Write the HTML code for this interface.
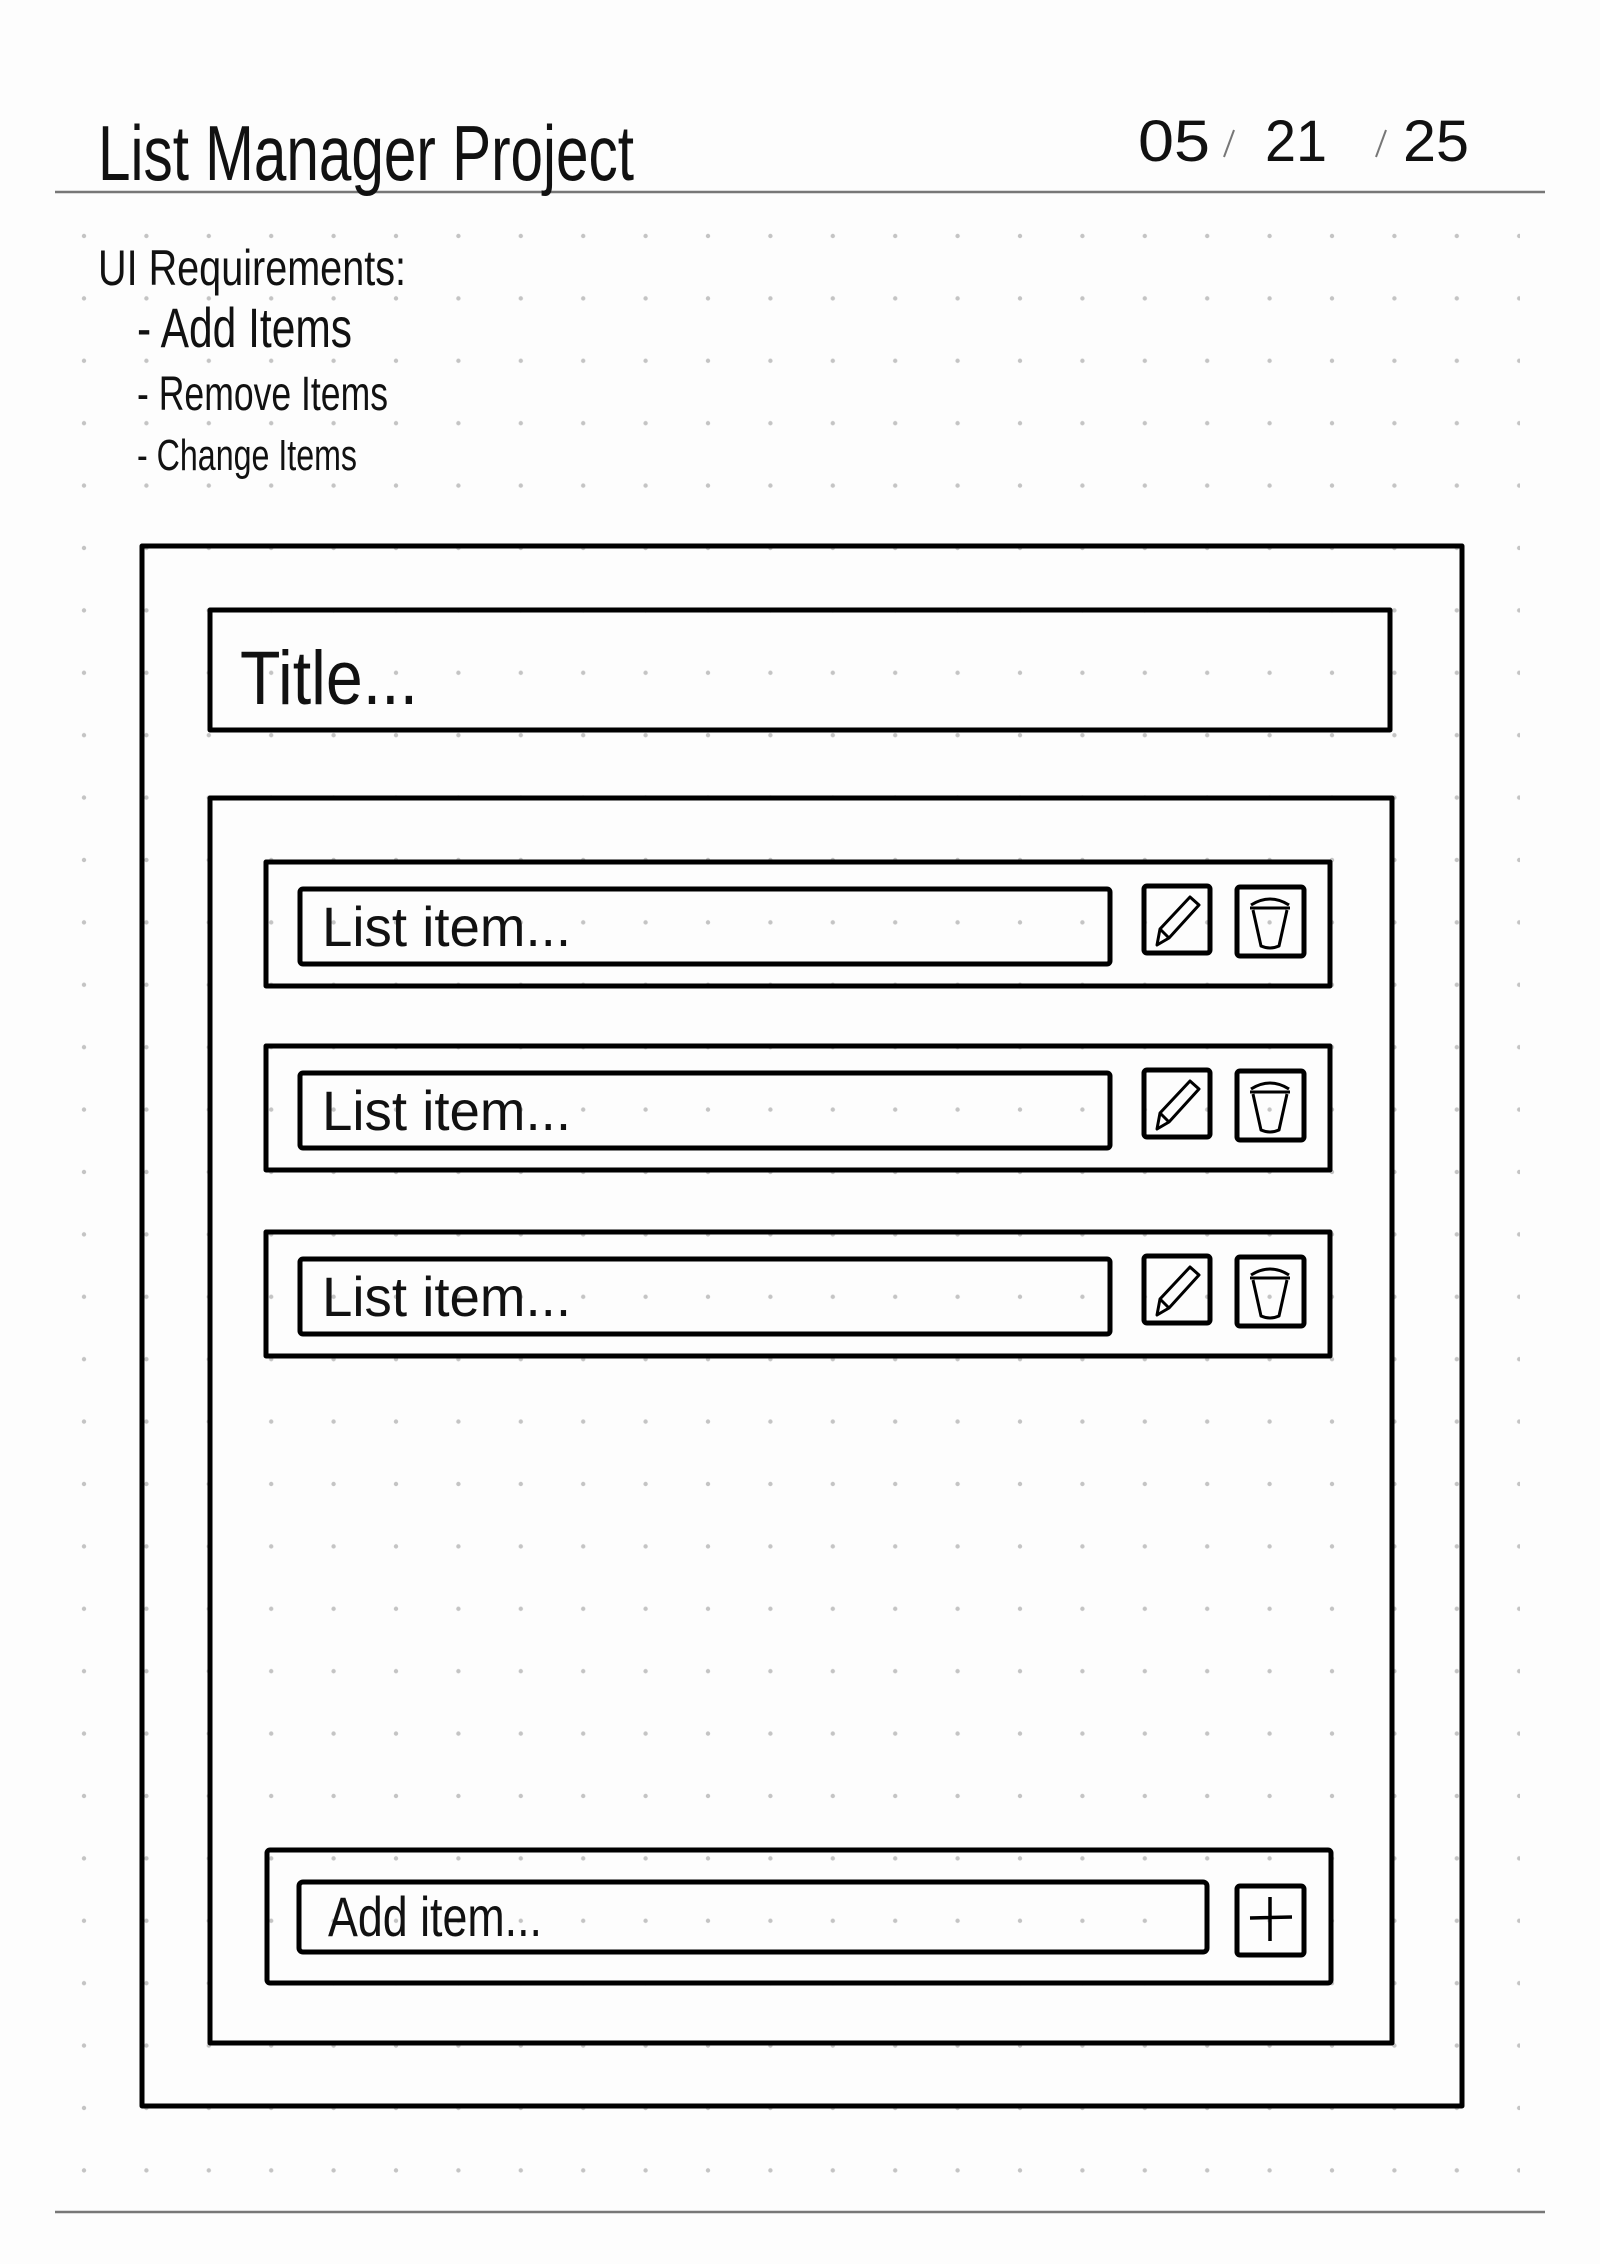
<!DOCTYPE html>
<html><head><meta charset="utf-8"><style>
html,body{margin:0;padding:0;background:#fdfdfd;}
svg{display:block}
text{font-family:"Liberation Sans",sans-serif;fill:#111;}
</style></head><body>
<svg width="1600" height="2264" viewBox="0 0 1600 2264" xmlns="http://www.w3.org/2000/svg">
<defs>
<pattern id="dots" x="84" y="236" width="62.4" height="62.4" patternUnits="userSpaceOnUse">
<circle cx="0" cy="0" r="2.2" fill="#c4c4c4"/><circle cx="62.4" cy="0" r="2.2" fill="#c4c4c4"/><circle cx="0" cy="62.4" r="2.2" fill="#c4c4c4"/><circle cx="62.4" cy="62.4" r="2.2" fill="#c4c4c4"/>
</pattern>
</defs>
<rect x="0" y="0" width="1600" height="2264" fill="#fdfdfd"/>
<rect x="80" y="232" width="1440" height="1942" fill="url(#dots)"/>
<line x1="55" y1="192" x2="1545" y2="192" stroke="#777" stroke-width="2.5"/>
<line x1="55" y1="2212" x2="1545" y2="2212" stroke="#777" stroke-width="2.5"/>

<text x="98" y="180" font-size="78" textLength="536" lengthAdjust="spacingAndGlyphs">List  Manager  Project</text>
<text x="1138" y="161" font-size="58" textLength="72" lengthAdjust="spacingAndGlyphs">05</text>
<text x="1265" y="161" font-size="58" textLength="62" lengthAdjust="spacingAndGlyphs">21</text>
<text x="1403" y="161" font-size="58" textLength="66" lengthAdjust="spacingAndGlyphs">25</text>
<line x1="1234" y1="130" x2="1224" y2="157" stroke="#777" stroke-width="2"/>
<line x1="1386" y1="130" x2="1376" y2="157" stroke="#777" stroke-width="2"/>

<text x="98" y="285" font-size="50" textLength="308" lengthAdjust="spacingAndGlyphs">UI Requirements:</text>
<text x="137" y="347" font-size="56" textLength="215" lengthAdjust="spacingAndGlyphs">- Add Items</text>
<text x="137" y="410" font-size="48" textLength="251" lengthAdjust="spacingAndGlyphs">- Remove Items</text>
<text x="137" y="470" font-size="44" textLength="220" lengthAdjust="spacingAndGlyphs">- Change Items</text>

<g fill="none" stroke="#000" stroke-width="5" stroke-linejoin="round">
<rect x="142" y="546" width="1320" height="1560"/>
<rect x="210" y="610" width="1180" height="120"/>
<rect x="210" y="798" width="1182" height="1245"/>
</g>
<text x="240" y="704" font-size="76" textLength="178" lengthAdjust="spacingAndGlyphs">Title...</text>

<g id="item">
<g fill="none" stroke="#000" stroke-width="5" stroke-linejoin="round">
<rect x="266" y="862" width="1064" height="124"/>
<rect x="300" y="889" width="810" height="75" rx="3"/>
<rect x="1144" y="886" width="66" height="67" rx="3"/>
<rect x="1237" y="887" width="67" height="69" rx="3"/>
</g>
<g fill="none" stroke="#000" stroke-width="3" stroke-linejoin="round">
<path d="M1157 945 L1160 929 L1190 897 L1199 905 L1169 938 Z M1160 929 L1169 938"/>
<path d="M1251 905 Q1270 893 1289 905 M1250 908 L1290 908 M1253 910 L1261 946 Q1270 950 1279 946 L1287 910"/>
</g>
<text x="322" y="946" font-size="56" textLength="249" lengthAdjust="spacingAndGlyphs">List item...</text>
</g>
<use href="#item" y="184"/>
<use href="#item" y="370"/>

<g fill="none" stroke="#000" stroke-width="5" stroke-linejoin="round">
<rect x="267" y="1850" width="1064" height="133" rx="3"/>
<rect x="299" y="1882" width="908" height="70" rx="4"/>
<rect x="1237" y="1886" width="67" height="69" rx="3"/>
</g>
<path d="M1250 1918 L1292 1917 M1270 1897 L1270 1941" stroke="#000" stroke-width="3.5" fill="none"/>
<text x="328" y="1936" font-size="56" textLength="214" lengthAdjust="spacingAndGlyphs">Add item...</text>
</svg>
</body></html>
